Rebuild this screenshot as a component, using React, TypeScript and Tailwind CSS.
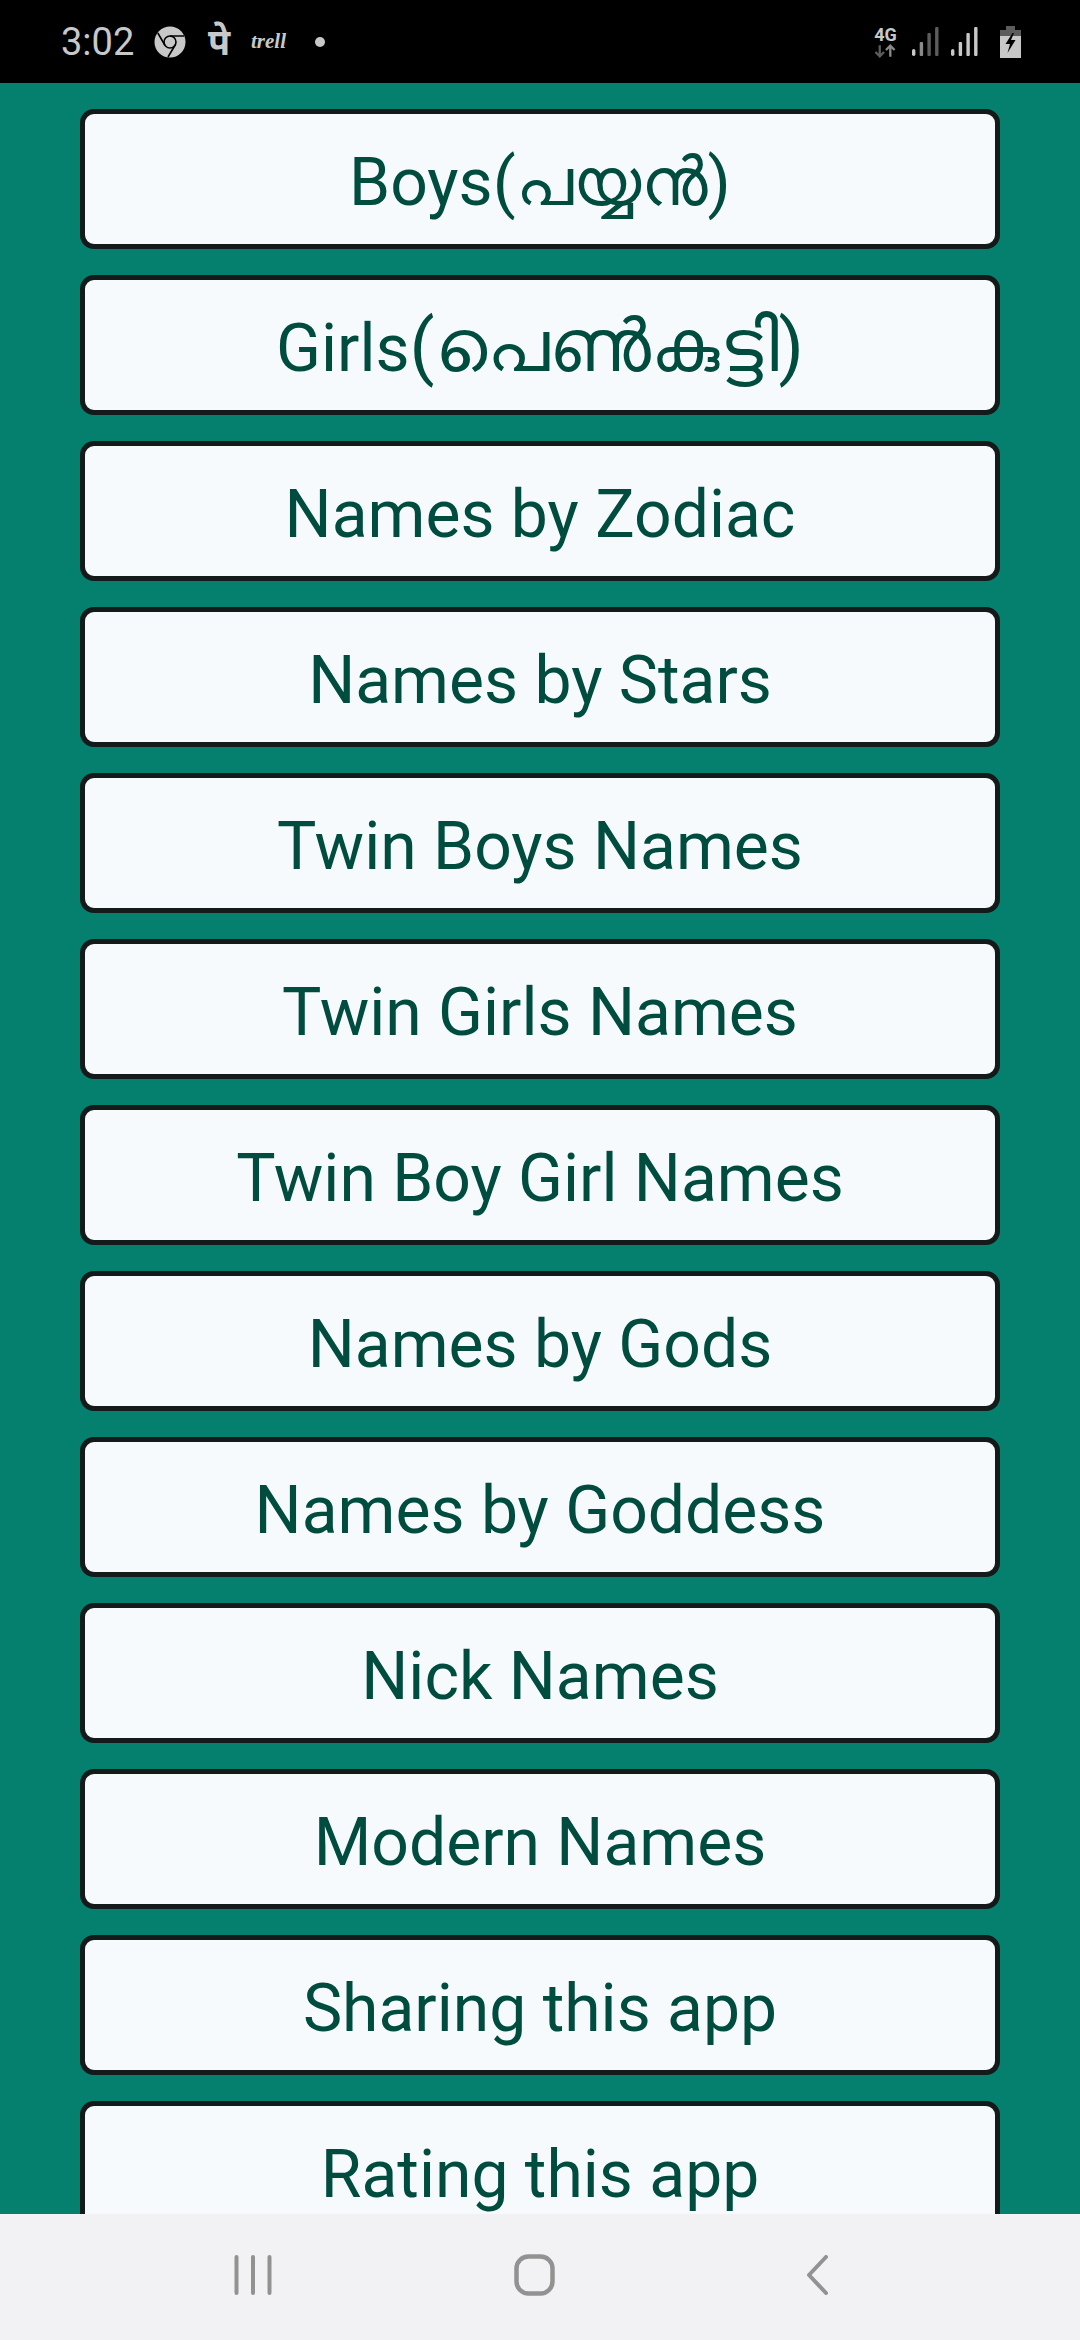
const ITEMS = [
  { label: "Boys", native: "(പയ്യൻ)", nativeClass: "text-[67px] leading-[0px]" },
  { label: "Girls", native: "(പെൺകുട്ടി)", nativeClass: "text-[73px] leading-[0px]" },
  { label: "Names by Zodiac" },
  { label: "Names by Stars" },
  { label: "Twin Boys Names" },
  { label: "Twin Girls Names" },
  { label: "Twin Boy Girl Names" },
  { label: "Names by Gods" },
  { label: "Names by Goddess" },
  { label: "Nick Names" },
  { label: "Modern Names" },
  { label: "Sharing this app" },
  { label: "Rating this app" },
];

function ChromeIcon() {
  return (
    <svg width="32" height="32" viewBox="0 0 32 32" fill="none">
      <circle cx="16" cy="16" r="15.5" fill="#c8c8c8" />
      <circle cx="16" cy="16" r="6" fill="#c8c8c8" stroke="#000" strokeWidth="1.6" />
      <path d="M16 10H30M10.8 19L3.8 7M21.2 19L14 31" stroke="#000" strokeWidth="1.6" />
    </svg>
  );
}

function Signal({ dim }: { dim: boolean }) {
  return (
    <svg width="27" height="29" viewBox="0 0 27 29">
      <rect x="0" y="22" width="3.4" height="7" rx="1.7" fill="#c8c8c8" />
      <rect x="7.7" y="15" width="3.4" height="14" rx="1" fill={dim ? "#8a8a8a" : "#c8c8c8"} />
      <rect x="15.4" y="6" width="3.4" height="23" rx="1" fill={dim ? "#5c5c5c" : "#c8c8c8"} />
      <rect x="23.1" y="0" width="3.4" height="29" rx="1" fill={dim ? "#5c5c5c" : "#c8c8c8"} />
    </svg>
  );
}

function StatusBar() {
  return (
    <div className="flex h-[83px] shrink-0 items-center justify-between bg-black pl-[61px] pr-[59px] text-[#c8c8c8]">
      <div className="flex items-center">
        <span className="w-[73px] text-[38px] leading-none font-['Roboto',sans-serif]">3:02</span>
        <span className="ml-[20px] flex"><ChromeIcon /></span>
        <span className="ml-[20px] w-[26px] text-center text-[36px] font-bold leading-none font-['Noto_Sans','DejaVu_Sans',sans-serif]">पे</span>
        <span className="ml-[19px] w-[38px] text-[21px] font-bold italic leading-none font-['Liberation_Serif',serif]">trell</span>
        <span className="ml-[26px] h-[10px] w-[10px] rounded-full bg-[#c8c8c8]" />
      </div>
      <div className="flex items-center">
        <div className="flex w-[23px] flex-col items-center leading-none">
          <span className="text-[18px] font-bold leading-[18px] font-['Roboto',sans-serif]">4G</span>
          <svg width="23" height="14" viewBox="0 0 24 14" fill="none" strokeWidth="2.4">
            <path d="M6 1V12M1.5 8L6 12.5L10.5 8" stroke="#5c5c5c" />
            <path d="M17 13V2M12.5 6L17 1.5L21.5 6" stroke="#8a8a8a" />
          </svg>
        </div>
        <span className="ml-[15px] flex"><Signal dim /></span>
        <span className="ml-[12px] flex"><Signal dim={false} /></span>
        <span className="ml-[22px] flex">
          <svg width="21" height="32" viewBox="0 0 21 32">
            <path d="M6 0H15V4H21V32H0V4H6Z" fill="#c8c8c8" />
            <path d="M6 0H15V4H21V10H0V4H6Z" fill="#5c5c5c" />
            <path d="M12.5 7L5.5 18H10L7.5 27L15.5 14H11L14 7Z" fill="#000" />
          </svg>
        </span>
      </div>
    </div>
  );
}

function NavBar() {
  return (
    <div className="flex h-[126px] shrink-0 items-center bg-[#f2f2f4] pb-[4px] pl-[234px]">
      <svg width="38" height="40" viewBox="0 0 38 40" stroke="#929292" strokeWidth="4" strokeLinecap="round">
        <path d="M2.5 2V38M19 2V38M35.5 2V38" />
      </svg>
      <svg className="ml-[242px]" width="41" height="42" viewBox="0 0 41 42" fill="none" stroke="#929292" strokeWidth="4.5">
        <rect x="2.5" y="2.5" width="36" height="37" rx="12" />
      </svg>
      <svg className="ml-[251px]" width="22" height="40" viewBox="0 0 22 40" fill="none" stroke="#929292" strokeWidth="4" strokeLinecap="round" strokeLinejoin="round">
        <path d="M20 2L3 20L20 38" />
      </svg>
    </div>
  );
}

export default function App() {
  return (
    <div className="flex h-[2340px] w-[1080px] flex-col overflow-hidden bg-[#05806f] font-['Roboto','Noto_Sans',sans-serif]">
      <StatusBar />
      <div className="flex min-h-0 flex-1 flex-col gap-[26px] overflow-hidden px-[80px] pt-[26px]">
        {ITEMS.map((item) => (
          <button
            key={item.label}
            type="button"
            className="flex h-[140px] w-[920px] shrink-0 items-baseline justify-center rounded-[14px] border-[5px] border-[#14191a] bg-[#f6fafc] pt-[36px] text-[66px] leading-none text-[#004d40]"
          >
            {item.label}
            {item.native && <span className={item.nativeClass}>{item.native}</span>}
          </button>
        ))}
      </div>
      <NavBar />
    </div>
  );
}
